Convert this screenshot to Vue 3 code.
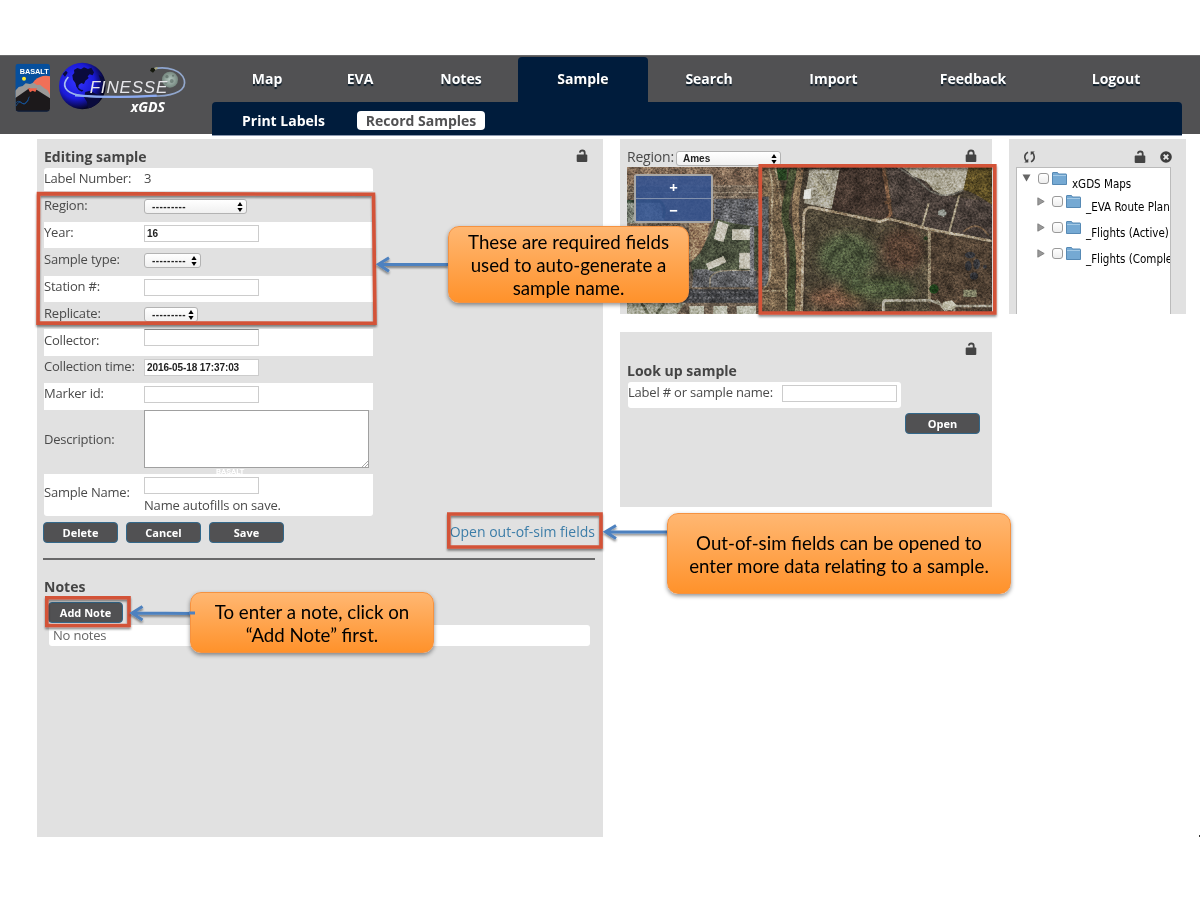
<script setup>
const nav = [
  { t: 'Map', w: 98 }, { t: 'EVA', w: 88 }, { t: 'Notes', w: 114 }, { t: 'Sample', w: 130, on: true },
  { t: 'Search', w: 122 }, { t: 'Import', w: 127 }, { t: 'Feedback', w: 152 }, { t: 'Logout', w: 134 },
]
const rows = [
  { l: 'Label Number:', k: 'text', v: '3', h: 23 },
  { l: 'Region:', k: 'select', w: 103, h: 31 },
  { l: 'Year:', k: 'input', v: '16', h: 26 },
  { l: 'Sample type:', k: 'select', w: 57, h: 28 },
  { l: 'Station #:', k: 'input', v: '', h: 26 },
  { l: 'Replicate:', k: 'select', w: 54, h: 27 },
  { l: 'Collector:', k: 'input', v: '', h: 27, dark: true },
  { l: 'Collection time:', k: 'input', v: '2016-05-18 17:37:03', h: 27 },
  { l: 'Marker id:', k: 'input', v: '', h: 27 },
  { l: 'Description:', k: 'area', h: 64 },
  { l: 'Sample Name:', k: 'name', h: 42 },
]
const tree = ['_EVA Route Plan', '_Flights (Active)', '_Flights (Comple']
const cars = []
for (let r = 0; r < 9; r++) for (let c = 0; c < 6; c++) cars.push({ x: 288 + c * 24, y: 182 + r * 9 })
</script>

<template>
  <div class="page">
    <header class="top">
      <svg class="logos" width="212" height="79" viewBox="0 15 636 237">
        <defs>
          <radialGradient id="globe" cx=".38" cy=".4" r=".62">
            <stop offset="0" stop-color="#3434ff" /><stop offset=".6" stop-color="#1a1ad8" /><stop offset="1" stop-color="#03031c" />
          </radialGradient>
          <radialGradient id="moon"><stop offset="0" stop-color="#b5c8c0" /><stop offset="1" stop-color="#75877f" /></radialGradient>
          <linearGradient id="orbit" x1="0" x2="1"><stop offset="0" stop-color="#a9c0f0" /><stop offset=".4" stop-color="#7f9cd8" /><stop offset="1" stop-color="#93a8cc" /></linearGradient>
          <clipPath id="badge"><rect x="46" y="41" width="104" height="144" rx="10" /></clipPath>
          <clipPath id="gc"><circle cx="247" cy="108" r="70" /></clipPath>
        </defs>
        <g clip-path="url(#badge)">
          <rect x="46" y="41" width="104" height="144" fill="#064f9d" />
          <circle cx="138" cy="124" r="47" fill="#f07058" />
          <path d="M46 122l10-11 12-3 9-8 13 2 10-4 11 7 9-1 13 11 9 5 8 14v50H46z" fill="#9a9998" />
          <path d="M46 144l42-29 8 6 10-3 6 3 38 24v40H46z" fill="#1c191b" />
          <path d="M84 115l6 12 8-5 8 4 5-11z" fill="#ee624a" />
          <path d="M46 160q10-11 18-2t22-9M48 168q9-18 19-8t21-20" fill="none" stroke="#17569c" stroke-width="2.5" />
          <rect x="46" y="181" width="104" height="4" fill="#101c38" />
          <circle cx="72" cy="86" r="6" fill="#ffe92e" />
        </g>
        <text x="59" y="73" class="basalt" textLength="87">BASALT</text>
        <circle cx="247" cy="108" r="70" fill="url(#globe)" />
        <g clip-path="url(#gc)" fill="#0a0b3c">
          <path d="M222 60l10-6 11 4 9-6 12 5 10-4 8 14-4 9-9-3-6 6 3 5-10 8-4 10-8-3-8 6-1 8 8 6 7 1-4 5-10-5-7-10-3-11-7-10-2-13 6-7z" />
          <path d="M256 126l14-4 17 9 15 6-4 18-22 21-12 2-3-22-9-14z" />
          <path d="M188 72l10-10 5 6-8 12zM296 74l15 11 3 12-12-5z" />
        </g>
        <circle cx="510" cy="89" r="24" fill="url(#moon)" />
        <g fill="#46544f" opacity=".5"><circle cx="501" cy="80" r="5" /><circle cx="515" cy="93" r="6" /><circle cx="498" cy="97" r="4" /><circle cx="519" cy="77" r="3" /></g>
        <path d="M205 81c-22 24-10 47 30 54 45 10 165 5 240 3 52-2 85-18 78-48-7-28-50-42-90-34" fill="none" stroke="url(#orbit)" stroke-width="5" />
        <path d="M225 136q120 9 245 1" fill="none" stroke="#8caaf0" stroke-width="7" />
        <path d="M450 62l4-8 9-1 3 7-7 8z" fill="#15180e" /><path d="M462 55l9-4 3 3-7 5z" fill="#a8a474" />
        <text x="269" y="129" class="fin" textLength="233">FINESSE</text>
        <text x="392" y="187" class="xg" textLength="103" lengthAdjust="spacingAndGlyphs">xGDS</text>
      </svg>
      <div class="navs">
        <nav class="main">
          <a v-for="n in nav" :key="n.t" :class="{ on: n.on }" :style="{ width: n.w + 'px' }">{{ n.t }}</a>
        </nav>
        <nav class="sub"><a>Print Labels</a><a class="sel">Record Samples</a></nav>
      </div>
    </header>

    <main class="cols">
      <section class="panel edit">
        <div class="head"><h2>Editing sample</h2>
          <svg class="lock" width="12" height="14" viewBox="0 0 12 14"><rect x=".7" y="5.5" width="10.6" height="7.6" rx="1" fill="#444" /><path d="M8.7 6V3.8Q8.7 1.5 6.3 1.5 4.1 1.5 3.8 3.7" fill="none" stroke="#444" stroke-width="1.8" /></svg>
        </div>
        <div class="form">
          <div v-for="(r, i) in rows" :key="r.l" class="row" :class="[{ white: i % 2 === 0 }, r.k]" :style="{ height: r.h + 'px' }">
            <label>{{ r.l }}</label>
            <span v-if="r.k === 'text'" class="val">{{ r.v }}</span>
            <span v-else-if="r.k === 'select'" class="sel-box" :style="{ width: r.w + 'px' }"><i>---------</i>
              <svg width="6" height="10" viewBox="0 0 6 10"><path d="M3 0L5.6 4H.4zM3 10L5.6 6H.4z" /></svg></span>
            <span v-else-if="r.k === 'input'" class="inp" :class="{ dark: r.dark }">{{ r.v }}</span>
            <span v-else-if="r.k === 'area'" class="ta"><svg width="6" height="6" viewBox="0 0 6 6"><path d="M0 6L6 0M3 6L6 3" stroke="#aaa" /></svg></span>
            <div v-else class="nm"><span class="inp"></span><span class="hint">Name autofills on save.</span></div>
          </div>
          <span class="ghost">BASALT</span>
        </div>
        <div class="actions">
          <div class="btns"><button>Delete</button><button>Cancel</button><button>Save</button></div>
          <a>Open out-of-sim fields</a>
        </div>
        <hr>
        <h2 class="notes">Notes</h2>
        <button class="add">Add Note</button>
        <div class="none">No notes</div>
      </section>

      <div class="mid">
        <section class="panel mapp">
          <div class="maphead"><span class="reg">Region:</span><span class="sel-box ames"><b>Ames</b>
            <svg width="6" height="10" viewBox="0 0 6 10"><path d="M3 0L5.6 4H.4zM3 10L5.6 6H.4z" /></svg></span>
            <svg class="lock" width="12" height="14" viewBox="0 0 12 14"><rect x=".7" y="5.5" width="10.6" height="7.6" rx="1" fill="#444" /><path d="M3.3 6.5V4Q3.3 1.5 6 1.5T8.7 4V6.5" fill="none" stroke="#444" stroke-width="1.8" /></svg>
          </div>
          <div class="map">
            <svg width="365" height="147" viewBox="21 81 1095 441" preserveAspectRatio="none">
              <defs>
                <filter id="grain" x="0" y="0" width="1" height="1" color-interpolation-filters="sRGB"><feTurbulence type="fractalNoise" baseFrequency=".16" numOctaves="3" seed="7" /><feColorMatrix values="1.5 0 0 0 -.22  1.5 0 0 0 -.22  1.5 0 0 0 -.22  0 0 0 0 1" /></filter>
                <filter id="broad" x="0" y="0" width="1" height="1" color-interpolation-filters="sRGB"><feTurbulence type="fractalNoise" baseFrequency=".03" numOctaves="4" seed="21" /><feColorMatrix values="1.4 0 0 0 -.15  1.4 0 0 0 -.15  1.4 0 0 0 -.15  0 0 0 0 1" /></filter>
                <filter id="soft" x="-.3" y="-.3" width="1.6" height="1.6"><feGaussianBlur stdDeviation="14" /></filter>
              </defs>
              <rect x="21" y="81" width="410" height="441" fill="#66594b" />
              <path d="M21 81H425V138H21z" fill="#75604e" />
              <path d="M21 138H425M21 158H425M280 171H425" stroke="#918474" stroke-width="3" />
              <path d="M21 185H120L134 250H21z" fill="#7c8378" /><path d="M20 184H120Q140 200 130 235" fill="none" stroke="#2f3e31" stroke-width="8" />
              <path d="M207 250H270L250 330 207 370z" fill="#92765b" />
              <path d="M282 176H413V258H282z" fill="#58595c" />
              <rect v-for="(c, i) in cars" :key="i" :x="c.x" :y="c.y" width="14" height="3" :fill="i % 3 ? '#7c7d80' : '#3b3c43'" />
              <path d="M290 236L338 250 414 260V390L330 410 224 430 210 370 240 340z" fill="#454b3a" />
              <path d="M295 243L326 254 310 306 282 298zM336 268H390V300H336zM258 371L310 348 320 366 266 390zM358 338H390V386H358z" fill="#c2beb0" />
              <path d="M222 388H260Q285 400 300 391H410V442H216z" fill="#5a5b5e" /><path d="M270 442V415Q280 391 330 391H410" fill="none" stroke="#8c836f" stroke-width="4" />
              <path d="M207 448H425V488H190z" fill="#3d3e41" /><path d="M208 457H420M208 473H420" stroke="#5c5c5f" stroke-width="6" stroke-dasharray="8 6" />
              <path d="M21 488H195L170 522H21z" fill="#9a9c8a" /><path d="M85 522L65 490M110 522L132 490" stroke="#555846" stroke-width="8" />
              <path d="M208 498H252V522H208zM280 498H322V522H280zM350 498H408V522H350z" fill="#b5b6a6" />
              <path d="M396 260V450" stroke="#6c6c70" stroke-width="13" />
              <rect x="425" y="81" width="691" height="441" fill="#453c31" />
              <path d="M425 81H470L500 200V522H425z" fill="#6c5a44" />
              <path d="M425 170H446V440H425z" fill="#56595b" />
              <path d="M463 86H500V121H470z" fill="#284522" />
              <path d="M445 81Q462 120 456 190L452 390Q450 436 430 446M466 81L490 230 498 400V515M425 452H540" fill="none" stroke="#93836a" stroke-width="6" />
              <path d="M520 81C512 150 490 190 496 240 518 310 528 360 514 420V522" fill="none" stroke="#3b422b" stroke-width="22" />
              <path d="M542 81C534 150 517 205 531 270 542 360 539 430 535 522" fill="none" stroke="#806a50" stroke-width="20" />
              <path d="M568 88L660 90 635 207 552 190z" fill="#969180" /><path d="M553 149L574 145 572 176 550 177z" fill="#e2e2dc" />
              <path d="M575 110l20 7-5 14 20 5-6 13 22 5-6 14-18-4M620 105l18 3-5 22-15-4z" fill="#aaa58f" />
              <path d="M660 81H785L820 232 805 240 636 207z" fill="#40332c" />
              <path d="M560 207L790 248 928 275V515H555z" fill="#484133" />
              <g filter="url(#soft)"><ellipse cx="680" cy="350" rx="85" ry="70" fill="#475137" /><ellipse cx="850" cy="330" rx="65" ry="65" fill="#503a2e" /><ellipse cx="650" cy="475" rx="85" ry="30" fill="#6c4e3b" /><ellipse cx="775" cy="445" rx="110" ry="35" fill="#444f35" /></g>
              <path d="M790 81L812 220 800 240M795 190l20-10M800 125l-10-25" fill="none" stroke="#6f513b" stroke-width="10" />
              <path d="M800 81H880L935 150 960 165 1116 185V300L930 265 820 230z" fill="#443b36" />
              <path d="M845 81H1050L1034 145 1010 160 968 166 940 150 920 125 880 108z" fill="#a8a391" />
              <path d="M1045 81H1116V194L1080 170 1050 155 1030 150z" fill="#534621" />
              <path d="M832 81L880 110 930 153 965 166 1000 163 1030 150" fill="none" stroke="#6c6960" stroke-width="5" />
              <path d="M930 275L1116 310V515H930z" fill="#4b3d30" />
              <path d="M545 522L551 240Q550 195 580 203L780 245 805 236 930 268 1116 303" fill="none" stroke="#a3947b" stroke-width="8" />
              <path d="M928 270V490" stroke="#8b7d65" stroke-width="9" /><path d="M988 275L1018 165M906 260L926 190" stroke="#9a8e75" stroke-width="6" />
              <path d="M790 515V490Q790 481 801 481H930L975 498H1116M950 480L980 515M1002 490V520" fill="none" stroke="#9d9888" stroke-width="8" />
              <path d="M970 485l25-4 15 15-15 16-30-8z" fill="#b5b19c" /><path d="M1030 449h40v22h-40z" fill="#78785f" />
              <circle cx="942" cy="447" r="14" fill="#1d3b19" /><circle cx="917" cy="295" r="6" fill="#22301b" />
              <g fill="#303135"><ellipse cx="1050" cy="345" rx="16" ry="10" /><ellipse cx="1045" cy="378" rx="10" ry="15" /><ellipse cx="1070" cy="372" rx="10" ry="16" /><ellipse cx="1062" cy="408" rx="12" ry="11" /><circle cx="1095" cy="380" r="6" /></g>
              <path d="M1030 275q45-38 76 12" fill="none" stroke="#6d5742" stroke-width="5" />
              <path d="M955 212l16-5 10 12-9 12-18-7z" fill="#888c84" />
              <rect class="ov" x="21" y="81" width="1095" height="441" filter="url(#grain)" opacity=".42" /><rect class="ov" x="21" y="81" width="1095" height="441" filter="url(#broad)" opacity=".35" />
            </svg>
            <div class="zoom"><span>+</span><span>−</span></div>
          </div>
        </section>
        <section class="panel look">
          <div class="lr"><svg class="lock" width="12" height="14" viewBox="0 0 12 14"><rect x=".7" y="5.5" width="10.6" height="7.6" rx="1" fill="#444" /><path d="M8.7 6V3.8Q8.7 1.5 6.3 1.5 4.1 1.5 3.8 3.7" fill="none" stroke="#444" stroke-width="1.8" /></svg></div>
          <h2>Look up sample</h2>
          <div class="lrow"><label>Label # or sample name:</label><span class="inp"></span></div>
          <button>Open</button>
        </section>
      </div>

      <section class="panel layers">
        <div class="icons">
          <svg width="13" height="14" viewBox="0 0 13 14"><path d="M5 2.2Q1.5 4 1.8 7.5 2 10 4 11.3M8 11.8Q11.5 10 11.2 6.5 11 4 9 2.7" fill="none" stroke="#444" stroke-width="1.6" /><path d="M1.3 12.5H5.3V8.7zM11.7 1.5H7.7V5.3z" fill="#444" /></svg>
          <svg class="l2" width="12" height="14" viewBox="0 0 12 14"><rect x=".7" y="5.5" width="10.6" height="7.6" rx="1" fill="#444" /><path d="M8.7 6V3.8Q8.7 1.5 6.3 1.5 4.1 1.5 3.8 3.7" fill="none" stroke="#444" stroke-width="1.8" /></svg>
          <svg width="12" height="12" viewBox="0 0 12 12"><circle cx="6" cy="6" r="5.8" fill="#3e3e3e" /><path d="M3.7 3.7L8.3 8.3M8.3 3.7L3.7 8.3" stroke="#e8e8e8" stroke-width="1.9" /></svg>
        </div>
        <div class="tree">
          <div class="node root"><svg class="tw" width="9" height="8" viewBox="0 0 9 8"><path d="M.5 .5H8.5L4.5 7.5z" fill="#666" /></svg><i class="cb"></i>
            <svg class="fo" width="15" height="13" viewBox="0 0 15 13"><path d="M.5 1Q.5 .5 1 .5H5.5L6.5 2H14Q14.5 2 14.5 2.5V12.5H.5z" fill="#75a9d3" stroke="#5689b4" /><path d="M1 3.5H14" stroke="#a5cae6" /></svg><span>xGDS Maps</span></div>
          <div v-for="t in tree" :key="t" class="node kid"><svg class="tw" width="9" height="9" viewBox="0 0 9 9"><path d="M.8 .8V8.2L7.2 4.5z" fill="#999" stroke="#777" stroke-width=".8" /></svg><i class="cb"></i>
            <svg class="fo" width="15" height="13" viewBox="0 0 15 13"><path d="M.5 1Q.5 .5 1 .5H5.5L6.5 2H14Q14.5 2 14.5 2.5V12.5H.5z" fill="#75a9d3" stroke="#5689b4" /><path d="M1 3.5H14" stroke="#a5cae6" /></svg><span>{{ t }}</span></div>
        </div>
      </section>
    </main>

    <svg class="marks" width="1200" height="900" viewBox="0 0 1200 900">
      <defs><filter id="sh" x="-5%" y="-10%" width="112%" height="130%"><feDropShadow dx="0" dy="2" stdDeviation="1.3" flood-opacity=".45" /></filter></defs>
      <g fill="none" stroke="#d35239" stroke-width="3.6" filter="url(#sh)">
        <path d="M38.5 193.6L373.5 194.2 375 323.2 38 323.1z" />
        <path d="M760.3 165.7H994.8V313H760.3z" />
        <path d="M448.8 514H601V547H448.8z" />
        <path d="M46.8 597.8H129V625.5H46.8z" />
      </g>
      <g fill="none" stroke="#4d81bf" stroke-width="3" filter="url(#sh)">
        <path d="M448 264.4L380 264.2M389 257.8L378.5 264.2 389 271.2" /><path d="M668 532L608 531.8M616 525.5L605.5 531.8 616 538.6M195 613.4L134 613M142.5 606.4L132 613 142.5 620" />
      </g>
    </svg>
    <div class="call c1"><span>These are required fields</span><span>used to auto-generate a</span><span>sample name.</span></div>
    <div class="call c2"><span>Out-of-sim fields can be opened to</span><span>enter more data relating to a sample.</span></div>
    <div class="call c3"><span>To enter a note, click on</span><span>“Add Note” first.</span></div>
    <svg class="arrow-tip" width="6" height="4" viewBox="0 0 6 4"><path d="M0 2H6" stroke="#4d81bf" stroke-width="3" /></svg>
    <i class="dot"></i>
  </div>
</template>

<style>
body { background: #fff; }
</style>
<style scoped>
.page { position: relative; width: 1200px; height: 900px; overflow: hidden; box-sizing: border-box; padding-top: 55px; font-family: "Open Sans", sans-serif; color: #4a4a4a; font-size: 13px; }
.page * { box-sizing: border-box; }
svg { display: block; flex: none; }
.top { display: flex; height: 79px; background: #515153; border-top: 1px solid #69696a; }
.logos { margin-top: -1px; }
.basalt { font: bold 22px "Liberation Sans", sans-serif; fill: #fff; }
.fin { font: italic 51px "Liberation Sans", sans-serif; fill: #e6e6ea; }
.xg { font: italic bold 40px "Open Sans", sans-serif; fill: #fff; }
.navs { width: 970px; }
.main { display: flex; height: 46px; padding-left: 6px; }
.main a { display: flex; flex: none; justify-content: center; align-items: center; height: 45px; margin-top: 1px; padding-bottom: 2px; color: #fff; font-weight: bold; font-size: 14px; text-shadow: 0 1.5px 1px #0b1c2a; border-radius: 4px 4px 0 0; }
.main a.on { background: #001c3c; }
.sub { display: flex; align-items: center; gap: 32px; height: 34px; padding-left: 30px; background: #001c3c; border-bottom: 1px solid #8e9ab0; border-radius: 4px 4px 0 0; color: #fff; font-weight: bold; font-size: 14px; position: relative; }
.sub a { line-height: 19px; margin-top: 3px; white-space: nowrap; }
.sub .sel { background: #fff; color: #515153; border-radius: 4px; width: 128px; text-align: center; }
.cols { display: flex; margin: 5px 0 0 37px; align-items: flex-start; }
.panel { background: #e1e1e1; }
.edit { width: 566px; height: 698px; padding: 8px 8px 0 7px; margin-right: 17px; }
.head { display: flex; justify-content: space-between; height: 21px; padding-right: 7px; }
.head .lock { margin-top: 2px; }
h2 { margin: 0; font-size: 14px; line-height: 20px; font-weight: bold; color: #444; }
.form { width: 329px; position: relative; }
.row { display: flex; align-items: flex-start; }
.row.white { background: #fff; }
.row:first-child { border-radius: 3px 3px 0 0; }
.row:nth-child(11) { border-radius: 0 0 3px 3px; }
.row label { width: 100px; line-height: 18px; padding-top: 1px; white-space: nowrap; letter-spacing: -.2px; }
.row.select label { padding-top: 2px; }
.row:nth-child(2) label { padding-top: 5px; }
.row:nth-child(7) label { padding-top: 2px; }
.row.area label { padding-top: 20px; }
.row.name label { padding-top: 9px; }
.val { line-height: 20px; }
.inp { display: block; width: 115px; height: 17px; background: #fff; border: 1px solid #ccc; margin-top: 3px; padding-left: 2px; font: bold 10px/15px "Liberation Sans", sans-serif; color: #222; white-space: nowrap; letter-spacing: -.1px; }
.inp.dark { margin-top: 0; border-top-color: #888; }
.sel-box { display: flex; justify-content: space-between; align-items: center; height: 15px; margin-top: 5px; padding: 0 3px 0 7px; background: linear-gradient(#fff, #f0f0f0); border: 1px solid #b3b3b3; border-radius: 3px; font: bold 10px "Liberation Sans", sans-serif; color: #222; }
.sel-box i { font-style: normal; letter-spacing: .45px; }
.row:nth-child(2) .sel-box { margin-top: 8px; }
.ta { width: 225px; height: 58px; border: 1px solid #a0a0a0; background: #fff; display: flex; align-items: flex-end; justify-content: flex-end; }
.ghost { position: absolute; left: 172px; top: 299px; font: bold 7.8px/9px Roboto, sans-serif; color: #fff; }
.nm .hint { display: block; line-height: 18px; margin-top: 2px; white-space: nowrap; letter-spacing: -.18px; }
.nm .inp { margin-top: 3px; }
.actions { display: flex; justify-content: space-between; margin-top: 6px; height: 21px; }
.actions a { color: #3c7da8; font-size: 14px; line-height: 19px; white-space: nowrap; }
.btns { display: flex; gap: 8px; margin-left: -1px; }
button { width: 75px; height: 21px; padding: 0; border: 1px solid #33688a; border-radius: 4px; background: #515153; color: #fff; font: bold 11px/18px "Open Sans", sans-serif; }
hr { border: 0; height: 2px; background: #69696a; margin: 15px 0 17px -1px; }
.add { display: block; margin: 5px 0 0 4px; }
.none { margin: 2px 0 0 5px; width: 541px; height: 21px; line-height: 21px; padding-left: 4px; background: #fff; border-radius: 3px; color: #666; letter-spacing: -.2px; }
.mid { width: 372px; margin-right: 17px; }
.mapp { height: 175px; padding: 8px 0 0 7px; }
.maphead { display: flex; height: 20px; }
.reg { line-height: 19px; width: 49px; font-size: 14px; letter-spacing: -.2px; }
.ames { width: 105px; margin-top: 4px; padding-left: 6px; }
.mapp .lock { margin: 2px 0 0 184px; }
.map { position: relative; width: 365px; height: 147px; overflow: hidden; }
.ov { mix-blend-mode: overlay; }
.zoom { position: absolute; left: 7px; top: 7px; width: 79px; height: 49px; border: 2px solid #a9a8a6; border-radius: 3px; }
.zoom span { display: block; height: 22px; line-height: 22px; text-align: center; background: rgba(50, 84, 148, .85); color: #fff; font-weight: bold; font-size: 15px; }
.zoom span:first-child { height: 23px; border-bottom: 1px solid #8392ad; }
.look { margin-top: 18px; height: 175px; padding: 10px 12px 0 8px; display: flex; flex-direction: column; }
.lr { display: flex; justify-content: flex-end; padding-right: 3px; height: 19px; }
.look h2 { margin-left: -1px; }
.lrow { display: flex; width: 273px; height: 26px; background: #fff; border-radius: 3px; margin-top: 1px; }
.lrow label { width: 154px; line-height: 21px; white-space: nowrap; letter-spacing: -.2px; }
.look button { align-self: flex-end; margin-top: 5px; line-height: 17px; }
.layers { width: 177px; height: 175px; padding: 10px 15px 0 7px; }
.icons { display: flex; align-items: center; height: 15px; padding-left: 7px; }
.l2 { margin: 0 14px 0 auto; }
.icons svg:last-child { margin-right: -1px; }
.tree { margin-top: 3px; height: 147px; border: 1px solid #bbb; border-bottom: 0; background: #fff; overflow: hidden; }
.node { display: flex; height: 26px; align-items: flex-start; font: 11.5px/14px "DejaVu Sans Condensed", "DejaVu Sans", sans-serif; font-stretch: condensed; color: #000; white-space: nowrap; }
.node > * { flex: none; }
.root { padding-left: 5px; height: 23px; }
.kid { padding-left: 20px; }
.tw { margin-top: 6px; margin-right: 7px; }
.kid .tw { margin-right: 6px; }
.cb { width: 11px; height: 11px; border: 1px solid #999; border-radius: 3px; background: linear-gradient(#fff, #eee); margin: 5px 3px 0 0; }
.fo { margin: 4px 5px 0 0; }
.node span { margin-top: 9px; }
.marks { position: absolute; left: 0; top: 0; }
.call { position: absolute; display: flex; flex-direction: column; align-items: center; justify-content: center; background: linear-gradient(#ffb772, #ff922b); border: 1.5px solid #f59240; border-radius: 11px; box-shadow: 0 2px 4px rgba(0, 0, 0, .42); font: 18.7px/23px Lato, sans-serif; color: #000; white-space: nowrap; }
.c1 { left: 448px; top: 226px; width: 241px; height: 77px; padding-top: 2px; }
.c2 { left: 667px; top: 513px; width: 344px; height: 81px; padding-top: 3px; }
.c3 { left: 190px; top: 592px; width: 244px; height: 61px; padding-top: 2px; }
.arrow-tip { position: absolute; left: 189px; top: 611.3px; }
.dot { position: absolute; left: 1199px; top: 835px; width: 1px; height: 2px; background: #333; }
</style>
